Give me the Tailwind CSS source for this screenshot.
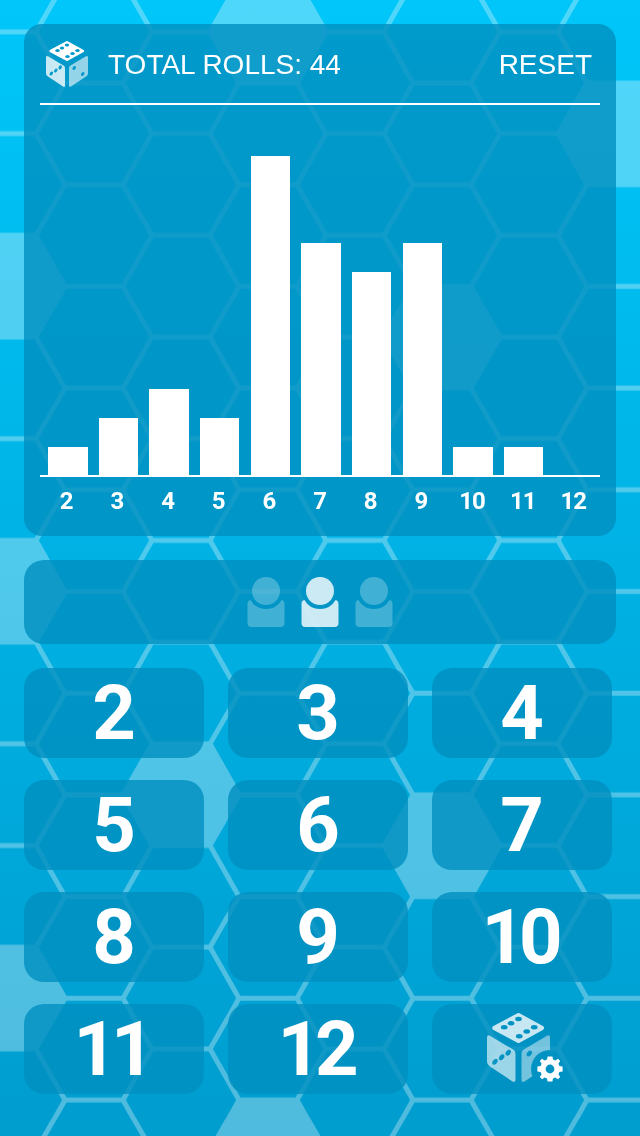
<!DOCTYPE html>
<html>
<head>
<meta charset="utf-8">
<script src="https://cdn.jsdelivr.net/npm/@tailwindcss/browser@4"></script>
</head>
<body class="m-0">
<div class="relative w-[640px] h-[1136px] overflow-hidden bg-gradient-to-b from-[#00c6f9] to-[#009dcf] font-['Roboto',sans-serif]">

  <!-- Hexagon background -->
  <svg class="absolute inset-0" width="640" height="1136" viewBox="0 0 640 1136">
    <defs>
      <pattern id="hexLines" patternUnits="userSpaceOnUse" width="174" height="101.7">
        <path fill="none" stroke="#fff" stroke-width="5" d="M65 83H123M152 32H210M-22 32H36M123 83L152 32M123 83L152 134.7M123 -18.7L152 32M65 83L36 32M65 83L36 134.7M65 -18.7L36 32"/>
      </pattern>
      <polygon id="hexFill" points="-29,-51 29,-51 58,0 29,51 -29,51 -58,0"/>
      <symbol id="dieHoles" viewBox="0 0 42 46">
        <ellipse cx="11.5" cy="9.5" rx="2.2" ry="1.5"/>
        <ellipse cx="16" cy="6.9" rx="2.2" ry="1.5"/>
        <ellipse cx="21" cy="4" rx="2.2" ry="1.5"/>
        <ellipse cx="21.5" cy="15.5" rx="2.2" ry="1.5"/>
        <ellipse cx="26.5" cy="12.4" rx="2.2" ry="1.5"/>
        <ellipse cx="31.5" cy="9.5" rx="2.2" ry="1.5"/>
        <ellipse cx="5.3" cy="32.5" rx="1.5" ry="2.2" transform="rotate(35 5.3 32.5)"/>
        <ellipse cx="9.8" cy="29.5" rx="1.5" ry="2.2" transform="rotate(35 9.8 29.5)"/>
        <ellipse cx="14.2" cy="26.4" rx="1.5" ry="2.2" transform="rotate(35 14.2 26.4)"/>
        <ellipse cx="28.2" cy="27" rx="1.5" ry="2.2" transform="rotate(35 28.2 27)"/>
        <ellipse cx="36.7" cy="33" rx="1.5" ry="2.2" transform="rotate(35 36.7 33)"/>
      </symbol>
      <symbol id="dieFaces" viewBox="0 0 42 46">
        <path fill="#fff" stroke="#fff" stroke-width="3" stroke-linejoin="round" d="M21 1.5L36.5 10L21 18.5L5 10Z"/>
        <path fill="#fff" fill-opacity=".78" d="M2 15.2L17.5 24.4Q19 25.3 19 27V44.5Q19 46.6 17 45.6L2 35.6Q0 34.4 0 32.5V16.5Q0 14.2 2 15.2Z"/>
        <path fill="#fff" fill-opacity=".58" d="M40 15.2L24.5 24.4Q23 25.3 23 27V44.5Q23 46.6 25 45.6L40 35.6Q42 34.4 42 32.5V16.5Q42 14.2 40 15.2Z"/>
      </symbol>
    </defs>
    <g opacity=".31" fill="#fff">
      <use href="#hexFill" x="616" y="134"/>
      <use href="#hexFill" x="268" y="32"/>
      <use href="#hexFill" x="7" y="286"/>
      <use href="#hexFill" x="442" y="337"/>
      <use href="#hexFill" x="7" y="590"/>
      <use href="#hexFill" x="181" y="795"/>
      <use href="#hexFill" x="442" y="846"/>
      <use href="#hexFill" x="7" y="998"/>
      <use href="#hexFill" x="268" y="1151"/>
      <rect width="640" height="1136" fill="url(#hexLines)"/>
    </g>
  </svg>

  <div class="relative flex flex-col pt-6">

    <!-- Chart panel -->
    <div class="mx-6 h-[512px] rounded-[18px] bg-[#008ebf]/80 px-4 text-white">
      <div class="flex items-center h-[81px] border-b-2 border-white font-['Liberation_Sans',sans-serif]">
        <svg class="ml-1.5" width="42" height="46" viewBox="0 0 42 46">
          <mask id="dieMaskSmall" maskUnits="userSpaceOnUse" x="0" y="0" width="42" height="46">
            <rect width="42" height="46" fill="#fff"/>
            <use href="#dieHoles" width="42" height="46" fill="#000"/>
          </mask>
          <g mask="url(#dieMaskSmall)"><use href="#dieFaces" width="42" height="46"/></g>
        </svg>
        <span class="ml-5 pt-0.5 text-[28px] leading-none">TOTAL ROLLS: 44</span>
        <span class="ml-auto mr-2 pt-0.5 text-[28px] leading-none">RESET</span>
      </div>

      <div class="flex items-end gap-[11.17px] h-[372px] pl-2 pr-1.5 border-b-2 border-white">
        <div class="w-[39.5px] shrink-0 h-[28px] bg-white"></div>
        <div class="w-[39.5px] shrink-0 h-[57px] bg-white"></div>
        <div class="w-[39.5px] shrink-0 h-[86px] bg-white"></div>
        <div class="w-[39.5px] shrink-0 h-[57px] bg-white"></div>
        <div class="w-[39.5px] shrink-0 h-[319px] bg-white"></div>
        <div class="w-[39.5px] shrink-0 h-[232px] bg-white"></div>
        <div class="w-[39.5px] shrink-0 h-[203px] bg-white"></div>
        <div class="w-[39.5px] shrink-0 h-[232px] bg-white"></div>
        <div class="w-[39.5px] shrink-0 h-[28px] bg-white"></div>
        <div class="w-[39.5px] shrink-0 h-[28px] bg-white"></div>
        <div class="w-[39.5px] shrink-0 h-0 bg-white"></div>
      </div>

      <div class="flex gap-[11.17px] pl-[7px] pt-2 text-2xl font-bold leading-8 text-center">
        <span class="w-[39.5px] shrink-0">2</span>
        <span class="w-[39.5px] shrink-0">3</span>
        <span class="w-[39.5px] shrink-0">4</span>
        <span class="w-[39.5px] shrink-0">5</span>
        <span class="w-[39.5px] shrink-0">6</span>
        <span class="w-[39.5px] shrink-0">7</span>
        <span class="w-[39.5px] shrink-0">8</span>
        <span class="w-[39.5px] shrink-0">9</span>
        <span class="w-[39.5px] shrink-0 tracking-[-1px]">10</span>
        <span class="w-[39.5px] shrink-0 tracking-[-1px]">11</span>
        <span class="w-[39.5px] shrink-0 tracking-[-1px]">12</span>
      </div>
    </div>

    <!-- Player selector -->
    <div class="mx-6 mt-6 h-[84px] rounded-[20px] bg-[#008ebf]/80 flex items-center justify-center gap-4">
      <svg class="opacity-25" width="38" height="50" viewBox="0 0 38 50" fill="#fff"><circle cx="19" cy="14" r="14"/><path d="M3.4 23A18 18 0 0 0 34.6 23Q37.5 23.5 37.5 27V46a4 4 0 0 1-4 4H4.5a4 4 0 0 1-4-4V27Q.5 23.5 3.4 23Z"/></svg>
      <svg class="opacity-80" width="38" height="50" viewBox="0 0 38 50" fill="#fff"><circle cx="19" cy="14" r="14"/><path d="M3.4 23A18 18 0 0 0 34.6 23Q37.5 23.5 37.5 27V46a4 4 0 0 1-4 4H4.5a4 4 0 0 1-4-4V27Q.5 23.5 3.4 23Z"/></svg>
      <svg class="opacity-25" width="38" height="50" viewBox="0 0 38 50" fill="#fff"><circle cx="19" cy="14" r="14"/><path d="M3.4 23A18 18 0 0 0 34.6 23Q37.5 23.5 37.5 27V46a4 4 0 0 1-4 4H4.5a4 4 0 0 1-4-4V27Q.5 23.5 3.4 23Z"/></svg>
    </div>

    <!-- Number buttons -->
    <div class="ml-6 mt-6 grid grid-cols-[180px_180px_180px] auto-rows-[90px] gap-x-6 gap-y-[22px] text-white text-[76px] font-bold leading-none">
      <button class="rounded-[20px] bg-[#008ebf]/80 flex items-center justify-center">2</button>
      <button class="rounded-[20px] bg-[#008ebf]/80 flex items-center justify-center">3</button>
      <button class="rounded-[20px] bg-[#008ebf]/80 flex items-center justify-center">4</button>
      <button class="rounded-[20px] bg-[#008ebf]/80 flex items-center justify-center">5</button>
      <button class="rounded-[20px] bg-[#008ebf]/80 flex items-center justify-center">6</button>
      <button class="rounded-[20px] bg-[#008ebf]/80 flex items-center justify-center">7</button>
      <button class="rounded-[20px] bg-[#008ebf]/80 flex items-center justify-center">8</button>
      <button class="rounded-[20px] bg-[#008ebf]/80 flex items-center justify-center">9</button>
      <button class="rounded-[20px] bg-[#008ebf]/80 flex items-center justify-center tracking-[-6px] pr-[6px]">10</button>
      <button class="rounded-[20px] bg-[#008ebf]/80 flex items-center justify-center tracking-[-6px] pr-[6px]">11</button>
      <button class="rounded-[20px] bg-[#008ebf]/80 flex items-center justify-center tracking-[-6px] pr-[6px]">12</button>
      <button class="rounded-[20px] bg-[#008ebf]/80 flex items-center justify-center">
        <svg class="ml-2" width="78" height="72" viewBox="0 0 78 72">
          <mask id="dieMaskLarge" maskUnits="userSpaceOnUse" x="0" y="0" width="78" height="72">
            <rect width="78" height="72" fill="#fff"/>
            <use href="#dieHoles" width="63" height="69" fill="#000"/>
            <circle cx="63" cy="56" r="19" fill="#000"/>
          </mask>
          <g mask="url(#dieMaskLarge)" opacity=".78"><use href="#dieFaces" width="63" height="69"/></g>
          <g transform="translate(63 56)" fill="#fff">
            <path fill-rule="evenodd" d="M-2.4 -12.6H2.4L3 -9.4 5.3 -8.4 8 -10.2 10.2 -8 8.4 -5.3 9.4 -3 12.6 -2.4V2.4L9.4 3 8.4 5.3 10.2 8 8 10.2 5.3 8.4 3 9.4 2.4 12.6H-2.4L-3 9.4-5.3 8.4-8 10.2-10.2 8-8.4 5.3-9.4 3-12.6 2.4V-2.4L-9.4 -3-8.4 -5.3-10.2 -8-8 -10.2-5.3 -8.4-3 -9.4ZM0 -4.4A4.4 4.4 0 1 0 0 4.4 4.4 4.4 0 1 0 0 -4.4Z"/>
          </g>
        </svg>
      </button>
    </div>
  </div>
</div>
</body>
</html>
